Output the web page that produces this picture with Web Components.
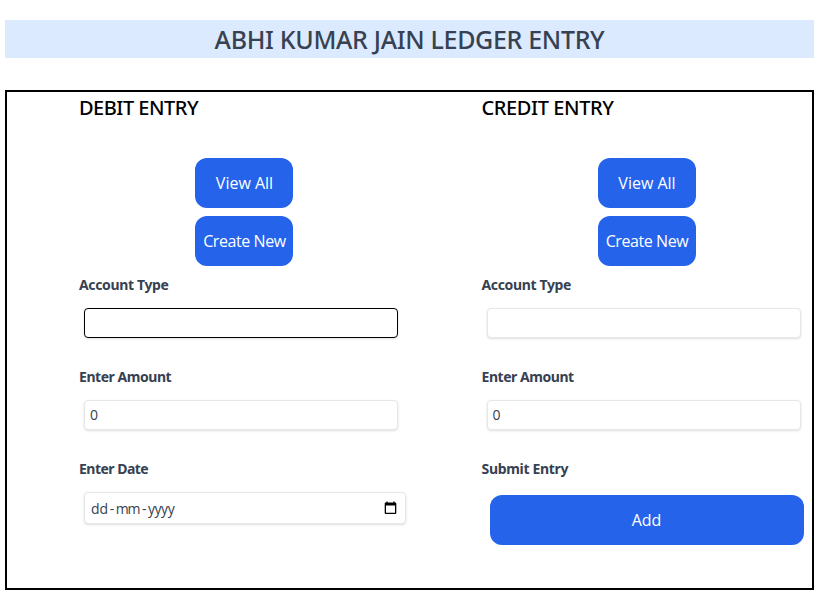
<!DOCTYPE html>
<html lang="en">
<head>
<meta charset="utf-8">
<title>Ledger Entry</title>
<style>
body { margin: 0; background: #fff; font-family: "Open Sans", "Noto Sans", sans-serif; }
</style>
</head>
<body>
<ledger-page></ledger-page>
<script>
const define = (name, html, setup) => {
  const template = document.createElement('template');
  template.innerHTML = html;
  customElements.define(name, class extends HTMLElement {
    connectedCallback() {
      if (this.shadowRoot) return;
      this.attachShadow({ mode: 'open' }).append(template.content.cloneNode(true));
      if (setup) setup(this, this.shadowRoot);
    }
  });
};

define('ledger-title', `<style>
  :host { display: block; height: 38px; line-height: 38px; background: #dbeafe; color: #374151;
    font-family: "Noto Sans", sans-serif; font-size: 25px; font-weight: 500; letter-spacing: -0.32px; text-align: center; }
</style><slot></slot>`);

define('entry-column', `<style>
  :host { display: flex; flex-direction: column; flex: 1 1 0; min-width: 0; box-sizing: border-box; padding-left: 72px; }
  h2 { margin: 0 0 36px; height: 30px; line-height: 32px; color: #000; white-space: nowrap;
    font-family: "Noto Sans", sans-serif; font-size: 20px; font-weight: 500; letter-spacing: var(--heading-spacing, -0.45px); }
  nav { display: flex; flex-direction: column; gap: 8px; width: 98px; margin: 0 0 9px 116px; }
</style><h2><slot name="heading"></slot></h2><nav><slot name="actions"></slot></nav><slot></slot>`);

define('action-button', `<style>
  :host { display: block; }
  button { display: block; width: 100%; height: 50px; padding: 0 0 0 var(--shift, 1px); border: 0; border-radius: 12px; background: #2563eb;
    color: #fff; font: 400 16px/50px "Open Sans", sans-serif; letter-spacing: var(--spacing, 0); white-space: nowrap; }
</style><button><slot></slot></button>`);

define('form-field', `<style>
  :host { display: block; height: 92px; }
  label { display: block; height: 20px; margin-bottom: 13px; line-height: 19px; color: #374151;
    font-family: "Noto Sans", sans-serif; font-size: 14px; font-weight: 700; letter-spacing: var(--label-spacing, -0.35px); }
</style><label></label><slot></slot>`,
  (host, root) => { root.querySelector('label').textContent = host.getAttribute('label'); });

define('text-box', `<style>
  :host { display: flex; align-items: center; justify-content: space-between; box-sizing: border-box;
    width: 314px; height: 30px; margin-left: 5px; padding: 0 5px; border: 1px solid #e5e7eb; border-radius: 4px;
    background: #fff; color: #374151; font-size: 14px; line-height: 28px;
    box-shadow: 0 1px 3px rgba(0,0,0,.1), 0 1px 2px -1px rgba(0,0,0,.1); }
  :host([active]) { border-color: #000; }
  :host([date]) { width: 322px; height: 32px; padding: 0 8px 0 6px; }
</style><slot></slot>`);

define('date-hint', `<style>
  :host { display: flex; gap: 1.5px; height: 30px; line-height: 31px; }
  .month { letter-spacing: -1px; margin-right: 1px; }
  .year { letter-spacing: -.5px; }
</style><span>dd</span><span>-</span><span class="month">mm</span><span>-</span><span class="year">yyyy</span>`);

define('calendar-icon', `<style>:host { display: block; width: 13px; height: 14px; } svg { display: block; }</style>
<svg width="13" height="14" viewBox="0 0 13 14">
  <path fill="#000" d="M2.4 .5h1.3v1H9.3v-1h1.3v1H11.300q1 0 1 1v9.500q0 1-1 1H1.700q-1 0-1-1V2.500q0-1 1-1h.7zM2 4.500v7.300h9V4.500z"/>
</svg>`);

define('ledger-page', `<style>
  :host { display: block; box-sizing: border-box; width: 820px; height: 599px; padding: 20px 6px 9px 5px; overflow: hidden; }
  main { display: flex; box-sizing: border-box; height: 500px; margin-top: 32px; border: 2px solid #000; }
  .submit { --shift: 0; margin: 16px 0 0 8px; width: 314px; }
  .wide { --spacing: -0.42px; }
</style>
<ledger-title>ABHI KUMAR JAIN LEDGER ENTRY</ledger-title>
<main>
  <entry-column style="--heading-spacing:-.5px">
    <span slot="heading">DEBIT ENTRY</span>
    <action-button slot="actions">View All</action-button>
    <action-button slot="actions" class="wide">Create New</action-button>
    <form-field label="Account Type"><text-box active></text-box></form-field>
    <form-field label="Enter Amount" style="--label-spacing:-.45px"><text-box>0</text-box></form-field>
    <form-field label="Enter Date" style="--label-spacing:-.52px"><text-box date><date-hint></date-hint><calendar-icon></calendar-icon></text-box></form-field>
  </entry-column>
  <entry-column style="--heading-spacing:-.4px">
    <span slot="heading">CREDIT ENTRY</span>
    <action-button slot="actions">View All</action-button>
    <action-button slot="actions" class="wide">Create New</action-button>
    <form-field label="Account Type"><text-box></text-box></form-field>
    <form-field label="Enter Amount" style="--label-spacing:-.45px"><text-box>0</text-box></form-field>
    <form-field label="Submit Entry" style="--label-spacing:-.32px"><action-button class="submit">Add</action-button></form-field>
  </entry-column>
</main>`);
</script>
</body>
</html>
